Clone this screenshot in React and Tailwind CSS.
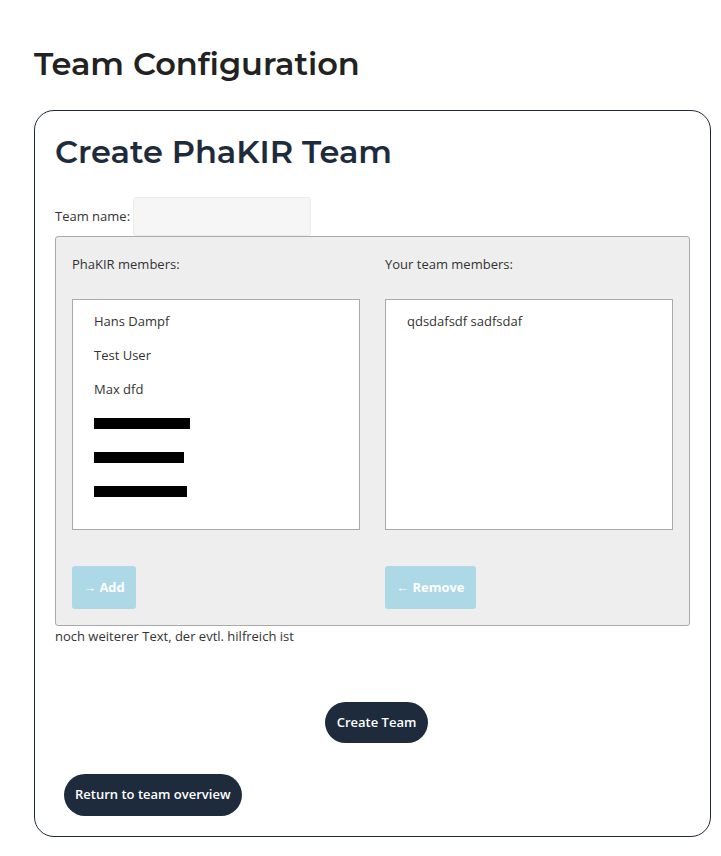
import React, { useState } from 'react';

const members = ['Hans Dampf', 'Test User', 'Max dfd'];
const redacted = [96, 90, 93];

const App = () => {
  const [teamName, setTeamName] = useState('');

  return (
    <div className="min-h-screen bg-white font-['Open_Sans',sans-serif] text-[#333]">
      <div className="pl-[34px] pr-[10px] pt-[42px] pb-5">
        <h1 className="text-[32px] leading-[44px] font-semibold text-[#222] font-['Montserrat','Open_Sans',sans-serif]">
          Team Configuration
        </h1>

        <div className="mt-[24px] border border-[#1f2937] rounded-[20px] pl-[20px] pr-[20px] pt-[20px] pb-[20px]">
          <h2 className="text-[32px] leading-[42px] font-semibold text-[#1e2b3c] font-['Montserrat','Open_Sans',sans-serif]">
            Create PhaKIR Team
          </h2>

          <div className="mt-[24px] flex items-center">
            <label className="text-[13px] text-[#333] mr-[3px]">Team name:</label>
            <input
              value={teamName}
              onChange={(e) => setTeamName(e.target.value)}
              className="w-[178px] h-[39px] bg-[#f6f6f6] border border-[#ececec] rounded-[3px] px-2 text-[13px] outline-none"
            />
          </div>

          <div className="bg-[#eeeeee] border border-[#aaaaaa] rounded-[3px] pl-[16px] pr-[16px] pt-[18px] pb-[16px] grid grid-cols-2 gap-x-[25px] text-[13px]">
            <div>
              <div className="leading-[18px]">PhaKIR members:</div>
              <div className="mt-[26px] h-[231px] bg-white border border-[#aaaaaa] pl-[21px] pt-[11px] text-[13px]">
                {members.map((m) => (
                  <div key={m} className="h-[34px] leading-[20px]">{m}</div>
                ))}
                {redacted.map((w, i) => (
                  <div key={i} className="h-[34px] pt-[5px]">
                    <div className="h-[11px] bg-black" style={{ width: w }} />
                  </div>
                ))}
              </div>
              <button className="mt-[36px] h-[43px] px-[11px] bg-[#add8e6] rounded-[3px] text-white font-bold text-[13px]">
                → Add
              </button>
            </div>
            <div>
              <div className="leading-[18px]">Your team members:</div>
              <div className="mt-[26px] h-[231px] bg-white border border-[#aaaaaa] pl-[21px] pt-[11px] text-[13px]">
                <div className="h-[34px] leading-[20px]">qdsdafsdf sadfsdaf</div>
              </div>
              <button className="mt-[36px] h-[43px] px-[11px] bg-[#add8e6] rounded-[3px] text-white font-bold text-[13px]">
                ← Remove
              </button>
            </div>
          </div>

          <p className="text-[13px] leading-[20px] mt-0">noch weiterer Text, der evtl. hilfreich ist</p>

          <div className="flex justify-center mt-[56px] pl-[8px]">
            <button className="h-[41px] px-[12px] rounded-full bg-[#1e2b3c] text-white font-semibold text-[13px]">
              Create Team
            </button>
          </div>

          <button className="mt-[31px] ml-[9px] h-[42px] px-[11px] rounded-full bg-[#1e2b3c] text-white font-semibold text-[13px]">
            Return to team overview
          </button>
        </div>
      </div>
    </div>
  );
};

export default App;
